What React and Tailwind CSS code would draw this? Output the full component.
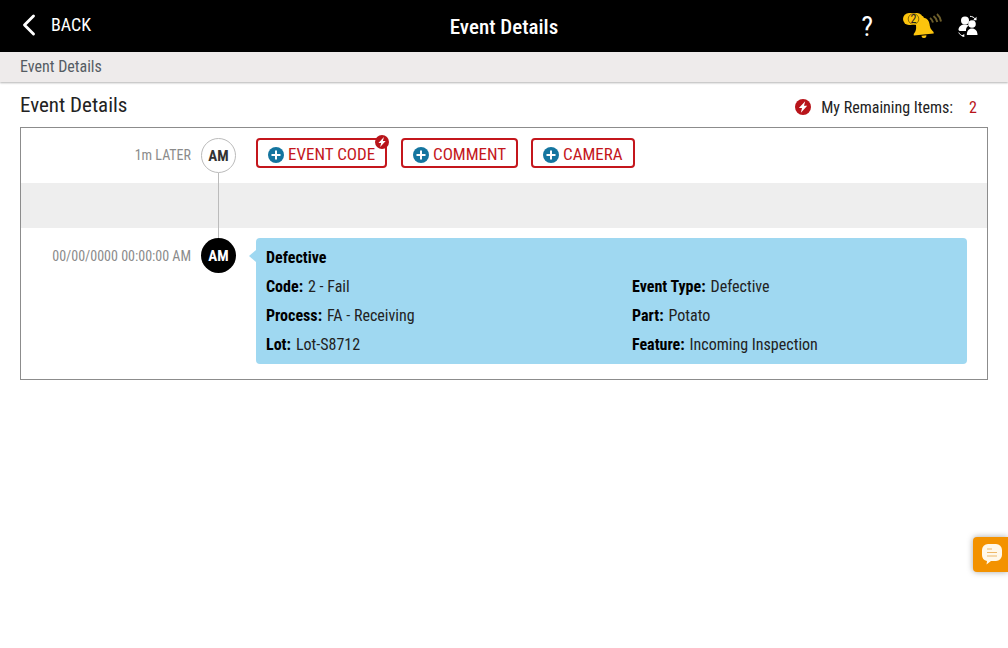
import React from 'react'
import { ChevronLeft } from 'lucide-react'

const cond = { fontFamily: '"Roboto", "Liberation Sans", sans-serif' }

const Bolt = ({ size = 16 }) => (
  <svg width={size} height={size} viewBox="0 0 16 16">
    <circle cx="8" cy="8" r="8" fill="#b8141a" />
    <path d="M10.200 2.200 L3.900 9 H7 L5.900 13.800 L12.200 6.800 H9 Z" fill="#fff" />
  </svg>
)

const PlusDot = () => (
  <svg width="16" height="16" viewBox="0 0 16 16" className="shrink-0">
    <circle cx="8" cy="8" r="8" fill="#14759f" />
    <path d="M8 3.500v9M3.500 8h9" stroke="#fff" strokeWidth="2" />
  </svg>
)

const ActionButton = ({ label, bolt, className }) => (
  <button className={`relative flex h-[30px] items-center gap-[4px] rounded-[4px] border-2 border-[#c4161c] pl-[10px] pt-[4px] text-[17px] text-[#c4161c] [font-stretch:75%] ${className}`}>
    <PlusDot />
    <span>{label}</span>
    {bolt && (
      <span className="absolute -right-[4px] -top-[5px]">
        <Bolt size={14} />
      </span>
    )}
  </button>
)

const Field = ({ label, value }) => (
  <div className="text-[16px] leading-[29px] text-[#222]">
    <span className="mr-[5px] font-bold text-black">{label}:</span>
    {value}
  </div>
)

export default function App() {
  return (
    <div style={cond} className="relative h-[648px] w-[1008px] overflow-hidden bg-white [font-stretch:75%]">
      {/* top bar */}
      <header className="relative flex h-[52px] items-center justify-between bg-black pl-[11px] pr-[29px] text-white">
        <div className="flex items-center gap-[4px]">
          <ChevronLeft size={36} strokeWidth={1.900} className="mb-[2px]" />
          <span className="pb-[4px] text-[18px]">BACK</span>
        </div>
        <h1 className="absolute left-0 right-0 pt-[4px] text-center text-[21px] font-medium">Event Details</h1>
        <div className="flex items-center">
          <span className="mr-[30px] pt-[1px] text-[28px]">?</span>
          <svg width="40" height="26" viewBox="0 0 40 26" className="mr-[14px]">
            <g transform="rotate(-6 20 14)">
              <path d="M20 3a1.800 1.800 0 0 1 1.800 1.800c3.400 1 5 4 5 7.200 0 4.500 1.500 6 3.200 8v1.500H10v-1.500c1.700-2 3.200-3.500 3.200-8 0-3.200 1.600-6.200 5-7.200A1.800 1.800 0 0 1 20 3z" fill="#fcc40d" />
              <path d="M17.500 22.500h5a2.500 2.500 0 0 1-5 0z" fill="#fcc40d" />
            </g>
            <path d="M27 5c1.500 1 2.500 2.500 3 4.500M30.500 3c2 1.500 3.300 3.500 3.800 6M34 1c2.300 2 3.500 4.500 4 7.500" stroke="#6e5f2c" strokeWidth="2" fill="none" />
            <rect x="0" y="0" width="20" height="12" rx="6" fill="#fcc40d" />
            <circle cx="10.500" cy="6" r="5.300" fill="none" stroke="#6e5600" strokeWidth="0.800" />
            <text x="10.500" y="10" textAnchor="middle" fontSize="12" fill="#222">2</text>
          </svg>
          <svg width="22" height="22" viewBox="0 0 22 22">
            <circle cx="8" cy="5.500" r="4" fill="#fff" />
            <path d="M1.500 15c0-3.500 2.800-5.500 6.500-5.500 1.500 0 2.700.3 3.600.9-1.600 1.100-2.600 2.700-2.600 4.600v1H2.500z" fill="#fff" />
            <circle cx="15" cy="9" r="3.800" fill="#fff" />
            <path d="M9.800 20c0-4.200 2-6.500 5.200-6.500s5.500 2.300 5.500 6.500z" fill="#fff" />
            <path d="M13 1.300c2.300.2 4.200 1.100 5.500 2.900M1.800 17.500c.8 1.800 2.300 3 4.200 3.500" stroke="#fff" strokeWidth="1" fill="none" />
            <path d="M19.500 1.800v3.400h-3.400zM7.300 19v3.200l-3-1.400z" fill="#fff" />
          </svg>
        </div>
      </header>

      {/* breadcrumb */}
      <div className="flex h-[30px] items-center bg-[#eeebeb] px-[20px] pb-[1px] text-[16px] text-[#555c63] shadow-[0_1px_2px_rgba(0,0,0,0.3)]">
        Event Details
      </div>

      <main className="px-[20px]">
        <div className="flex h-[45px] items-center justify-between">
          <h2 className="pt-[2px] text-[21px] text-[#222]">Event Details</h2>
          <div className="flex items-center pr-[11px] pt-[5px] text-[16px] text-[#222]">
            <Bolt size={16} />
            <span className="ml-[10px] pt-[2px]">My Remaining Items:</span>
            <span className="ml-[16px] pt-[2px] text-[#b8141a]">2</span>
          </div>
        </div>

        {/* timeline box */}
        <section className="relative h-[253px] border border-[#8c8c8c]">
          <span className="absolute left-[197px] top-[45px] h-[66px] w-px bg-[#bbb]" />

          <div className="relative flex h-[55px] pt-[10px]">
            <div className="w-[170px] pt-[7px] text-right text-[14px] text-[#8b8b8b]">1m LATER</div>
            <div className="ml-[10px] flex h-[35px] w-[35px] items-center justify-center rounded-full border border-[#bbb] bg-white pt-[1px] text-[15px] font-bold text-[#333]">
              AM
            </div>
            <div className="ml-[20px] flex gap-[14px]">
              <ActionButton label="EVENT CODE" bolt className="w-[131px]" />
              <ActionButton label="COMMENT" className="w-[117px]" />
              <ActionButton label="CAMERA" className="-ml-[1px] w-[104px]" />
            </div>
          </div>

          <div className="h-[45px] bg-[#eeeeee]" />

          <div className="relative flex pt-[10px]">
            <div className="w-[170px] pt-[8px] text-right text-[14px] text-[#8b8b8b]">00/00/0000 00:00:00 AM</div>
            <div className="ml-[10px] flex h-[35px] w-[35px] items-center justify-center rounded-full bg-black pt-[1px] text-[15px] font-bold text-white">
              AM
            </div>
            <div className="relative ml-[20px] h-[126px] w-[711px] rounded-[4px] bg-[#9fd8f1] px-[10px] pt-[5px]">
              <span className="absolute -left-[7px] top-[12px] border-y-[6px] border-r-[7px] border-y-transparent border-r-[#9fd8f1]" />
              <div className="text-[16px] font-bold leading-[29px] text-black">Defective</div>
              <div className="grid grid-cols-[366px_1fr]">
                <Field label="Code" value="2 - Fail" />
                <Field label="Event Type" value="Defective" />
                <Field label="Process" value="FA - Receiving" />
                <Field label="Part" value="Potato" />
                <Field label="Lot" value="Lot-S8712" />
                <Field label="Feature" value="Incoming Inspection" />
              </div>
            </div>
          </div>
        </section>
      </main>

      {/* chat tab */}
      <button className="absolute left-[973px] top-[537px] flex h-[35px] w-[35px] items-center justify-center rounded-l-[4px] bg-[#f39200] pl-[2px] shadow-[0_0_6px_rgba(0,0,0,0.35)]">
        <svg width="20" height="21" viewBox="0 0 20 21">
          <path d="M6 0h8a6 6 0 0 1 6 6v5a6 6 0 0 1-6 6H9l-4.500 3.500L5 16.900A6 6 0 0 1 0 11V6a6 6 0 0 1 6-6z" fill="#fff8ea" />
          <path d="M5 5h5M5 8.500h10M5 12h10" stroke="#eeb868" strokeWidth="1.200" />
        </svg>
      </button>
    </div>
  )
}
